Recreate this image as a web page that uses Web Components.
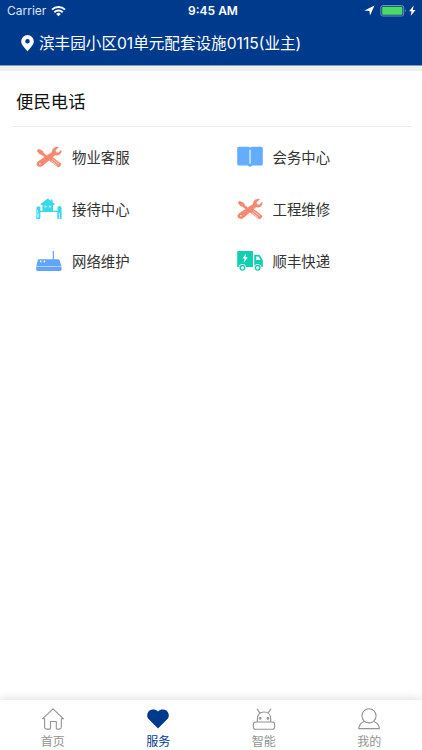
<!DOCTYPE html>
<html lang="zh-CN">
<head>
<meta charset="utf-8">
<title>便民电话</title>
<style>
    html, body {
        margin: 0;
        height: 100%;
        overflow: hidden;
        background: #fff;
        font-family: "Liberation Sans", "Noto Sans CJK SC", sans-serif;
    }
</style>
</head>
<body>
<service-page></service-page>

<script>
const icons = {
    tools: `
        <g fill="#f5886d" stroke="#f5886d" stroke-width=".3" stroke-linejoin="round">
            <path d="M22.700 1.200l-3.200 3 .5 2.200 2.300.4 3-2.700c.5 2.800-1.400 5.200-4.100 5.200-.7 0-1.400-.1-2-.4L6.600 19.700c-1.500 1.300-3.700 1.500-5 .3-1.300-1.300-1.100-3.300.5-4.500L16.200 5.900C15.900 3 18.800.3 22.700 1.200z"/>
            <path d="M2.600 3l4.200 2 .8 2.100 4.700 3.900-1.800 1.800-4.700-4-2.300-.7L.9 4.700z"/>
            <path d="M16.200 11l8.400 6.300c1.200 1.300-1 4.100-2.700 3.700L13 14.300z"/>
        </g>
        <circle cx="3.900" cy="17.800" r=".8" fill="#fff"/>
        <path d="M16.400 13l6.400 5M15 14.600l6.400 5" stroke="#fff" stroke-width=".6"/>`,
    book: `
        <path fill="#62adff" d="M2 .8h8.200c1.300 0 2.200.2 2.800.8.600-.6 1.500-.8 2.800-.8H24c1.200 0 1.800.7 1.800 1.700v15.400c0 1-.6 1.600-1.800 1.600h-8.500c-.9 0-1.200 1.300-2.500 1.300s-1.600-1.300-2.500-1.300H2c-1.200 0-1.800-.6-1.800-1.600V2.500C.2 1.500.8.800 2 .8z"/>
        <path d="M13 3.800v13.800" stroke="#fff" stroke-width="1.100"/>`,
    reception: `
        <g fill="#3ad9e8">
            <path d="M11.700.6l3 2.200V1.400h1.900v2.800l2.200 1.700-.7 1.200h-1v5.700H21v1.300H4.700v-1.300h1.800V7.100H5.200l-.7-1.200z"/>
            <path d="M.4 10.300c0-1.400 1-2.100 2-2.100s1.900.7 1.900 1.900v2.700h1.200v1.300H4.400v5.200c0 1.200-.8 2-2.100 2H.4zM21.500 10c0-1.200.8-2 2-2s2.100.8 2.100 2.200V21h-1.900v-6.200h-.8V21h-1.600v-6.900h-1.400v-1.300h1.600z"/>
        </g>
        <path d="M8.900 7.900h1.400v1.300H8.900zM13.200 7.900h1.400v1.300h-1.400zM1.600 12v2.300l1 1.500v3.300h-1v-3.300" fill="none" stroke="#fff" stroke-width=".5"/>`,
    router: `
        <g fill="#62a4f8">
            <path d="M16.700 1h1.200v8.300h4.200c.8 0 1.300.3 1.500 1l1.800 5.600H.4l1.400-5.600c.2-.7.700-1 1.400-1h13.500z"/>
            <path d="M.2 16.400h25.300v3.100c0 .9-.5 1.400-1.400 1.400H1.600c-.9 0-1.400-.5-1.400-1.400z"/>
        </g>
        <g fill="#fff"><circle cx="4.700" cy="11.400" r=".9"/><circle cx="8.400" cy="11.400" r=".9"/></g>`,
    truck: `
        <path fill="#13cfb1" d="M1.300 1h13.500c.8 0 1.200.4 1.200 1.200V17H9.200a4 4 0 0 0-7.700 0H.2V2c0-.7.400-1 1.100-1zM17.200 4.700h4.300c.7 0 1.100.3 1.500.9l2.500 3.900.3 1V17h-1.200a4 4 0 0 0-7.400-1z"/>
        <path fill="#fff" d="M9 3.500l-3.500 5h2.200l-1 4.300 4.100-5.600H8.400zM19.200 6.500h2.400l2 3.500h-4.400z"/>
        <g fill="#fff" stroke="#13cfb1" stroke-width="1.400"><circle cx="5.400" cy="17.800" r="2.300"/><circle cx="20.700" cy="17.800" r="2.300"/></g>`
};

const tabIcons = {
    home: `<path d="M3.600 11.800H1.500L12 1.800l10.500 10h-2.200v8.400c0 1.200-.7 1.900-1.900 1.900h-2.100c-.7 0-1-.4-1-1.100v-6.500H9.500V21c0 .7-.4 1.100-1.100 1.100H5.500c-1.200 0-1.900-.7-1.900-1.900z"/>`,
    heart: `<path fill="currentColor" d="M12 21.400L2.800 12.300C1.700 11.200 1.200 9.800 1.200 8.400c0-3 2.400-5.800 5.500-5.800 2.200 0 4.200.6 5.300 1.900 1.100-1.300 3.100-1.900 5.300-1.900 3.100 0 5.500 2.800 5.500 5.800 0 1.400-.5 2.800-1.600 3.900z" stroke="none"/>`,
    robot: `<path d="M5.400 15V11.500C5.400 7.700 8 5 12 5s6.700 2.700 6.700 6.500V15M7.900 6.100L5 1.700M16.100 6.100L19 1.700"/><rect x="1.400" y="15" width="21.200" height="7.300" rx="2.400"/><circle cx="8.200" cy="11.300" r=".8" fill="currentColor"/><circle cx="15.900" cy="11.300" r=".8" fill="currentColor"/>`,
    user: `<circle cx="12" cy="8.800" r="7.100"/><path d="M7.200 14.400c-3.200 1.100-5.100 3.500-5.500 7.200h20.700c-.4-3.700-2.300-6.100-5.500-7.200"/>`
};

class StatusBar extends HTMLElement {
    constructor() {
        super();
        this.attachShadow({ mode: 'open' });
        this.shadowRoot.innerHTML = `
            <style>
                :host {
                    display: grid;
                    grid-template-columns: 1fr auto 1fr;
                    align-items: center;
                    height: 22px;
                    padding: 0 5px 0 7px;
                    color: #fff;
                    font: 12px/22px Inter, sans-serif;
                }
                .carrier, .power { display: flex; align-items: center; }
                .carrier { gap: 5px; color: #dbe6f5; }
                .power { justify-content: flex-end; }
                .time { font-weight: 600; padding-left: 2px; }
                svg { display: block; }
            </style>
            <div class="carrier">
                <span>Carrier</span>
                <svg width="15" height="11" viewBox="0 0 15 11" fill="none" stroke="#fff" stroke-width="1.900">
                    <path d="M1 3.700a9.200 9.200 0 0 1 13 0M3.300 6.200a6 6 0 0 1 8.400 0"/>
                    <path d="M7.500 10.200L5.200 7.900a3.300 3.300 0 0 1 4.600 0z" fill="#fff" stroke="none"/>
                </svg>
            </div>
            <span class="time">9:45 AM</span>
            <div class="power">
                <svg width="54" height="14" viewBox="0 0 54 14">
                    <path fill="#fff" d="M11.500 1.500L7 11.500l-.6-4.400-5-.6z"/>
                    <rect x="17.900" y="1.500" width="22.800" height="10.500" rx="2" fill="none" stroke="#6f93c2"/>
                    <rect x="19.200" y="2.800" width="20.200" height="7.900" rx=".8" fill="#4cd964"/>
                    <path fill="#8ba7ce" d="M42 5.100q1.500 1.700 0 3.400z"/>
                    <path fill="#fff" d="M50.700 1.500L46.100 7.300h2.500l-1 4.700 4.900-5.900h-2.700z"/>
                </svg>
            </div>
        `;
    }
}

class LocationBar extends HTMLElement {
    constructor() {
        super();
        this.attachShadow({ mode: 'open' });
        this.shadowRoot.innerHTML = `
            <style>
                :host {
                    display: flex;
                    align-items: center;
                    gap: 5px;
                    height: 43px;
                    padding-left: 21px;
                    color: #fff;
                    font: 15.600px/43px Inter, "Noto Sans CJK SC", sans-serif;
                    white-space: nowrap;
                }
                svg { display: block; }
            </style>
            <svg width="13" height="17" viewBox="0 0 13 17">
                <path fill="#fff" fill-rule="evenodd" d="M6.500 0a6.300 6.300 0 0 1 6.300 6.400c0 3.200-3.400 6.400-6.300 9.800C3.600 12.800.2 9.600.2 6.400A6.300 6.300 0 0 1 6.500 0zm0 3.900a2.300 2.300 0 1 0 0 4.600 2.300 2.300 0 0 0 0-4.600z"/>
            </svg>
            <span><slot></slot></span>
        `;
    }
}

class ServiceItem extends HTMLElement {
    constructor() {
        super();
        this.attachShadow({ mode: 'open' });
    }

    connectedCallback() {
        this.shadowRoot.innerHTML = `
            <style>
                :host {
                    display: flex;
                    align-items: center;
                    gap: 10px;
                    height: 52px;
                    padding-left: 25px;
                    color: #333;
                    font-size: 14.400px;
                    line-height: 20px;
                }
                svg { display: block; }
                span { padding-top: 2px; }
            </style>
            <svg width="26" height="22" viewBox="0 0 26 22">${icons[this.getAttribute('icon')]}</svg>
            <span><slot></slot></span>
        `;
    }
}

class PhoneCard extends HTMLElement {
    constructor() {
        super();
        this.attachShadow({ mode: 'open' });
        this.shadowRoot.innerHTML = `
            <style>
                :host {
                    display: block;
                    padding: 6px 10px 0 11px;
                }
                h2 {
                    margin: 0;
                    padding-left: 5px;
                    height: 49px;
                    border-bottom: 1px solid #eee;
                    color: #111;
                    font-size: 17.400px;
                    font-weight: 400;
                    line-height: 50px;
                }
                .list {
                    display: grid;
                    grid-template-columns: 1fr 1fr;
                    padding-top: 4px;
                }
            </style>
            <h2><slot name="title"></slot></h2>
            <div class="list"><slot></slot></div>
        `;
    }
}

class TabItem extends HTMLElement {
    constructor() {
        super();
        this.attachShadow({ mode: 'open' });
    }

    connectedCallback() {
        this.shadowRoot.innerHTML = `
            <style>
                :host {
                    flex: 1;
                    display: flex;
                    flex-direction: column;
                    align-items: center;
                    padding-top: 7px;
                    color: #929292;
                    font-size: 12px;
                    line-height: 18px;
                }
                :host([active]) { color: #003a8c; }
                svg { display: block; flex: none; margin-bottom: 2px; }
            </style>
            <svg width="24" height="24" viewBox="0 0 24 24" fill="none" stroke="currentColor" stroke-width="1.100" stroke-linejoin="round">${tabIcons[this.getAttribute('icon')]}</svg>
            <span><slot></slot></span>
        `;
    }
}

class TabBar extends HTMLElement {
    constructor() {
        super();
        this.attachShadow({ mode: 'open' });
        this.shadowRoot.innerHTML = `
            <style>
                :host {
                    display: flex;
                    height: 50px;
                    background: #fff;
                    box-shadow: 0 0 10px rgba(0,0,0,0.16);
                }
            </style>
            <slot></slot>
        `;
    }
}

class ServicePage extends HTMLElement {
    constructor() {
        super();
        this.attachShadow({ mode: 'open' });
        this.shadowRoot.innerHTML = `
            <style>
                :host {
                    display: flex;
                    flex-direction: column;
                    height: 100vh;
                }
                header {
                    background: #003a8c;
                    border-bottom: 1px solid #7f9cc5;
                }
                main {
                    flex: 1;
                    border-top: 5px solid #efefef;
                }
            </style>
            <header>
                <status-bar></status-bar>
                <location-bar>滨丰园小区01单元配套设施0115(业主)</location-bar>
            </header>
            <main>
                <phone-card>
                    <span slot="title">便民电话</span>
                    <service-item icon="tools">物业客服</service-item>
                    <service-item icon="book">会务中心</service-item>
                    <service-item icon="reception">接待中心</service-item>
                    <service-item icon="tools">工程维修</service-item>
                    <service-item icon="router">网络维护</service-item>
                    <service-item icon="truck">顺丰快递</service-item>
                </phone-card>
            </main>
            <tab-bar>
                <tab-item icon="home">首页</tab-item>
                <tab-item icon="heart" active>服务</tab-item>
                <tab-item icon="robot">智能</tab-item>
                <tab-item icon="user">我的</tab-item>
            </tab-bar>
        `;
    }
}

customElements.define('status-bar', StatusBar);
customElements.define('location-bar', LocationBar);
customElements.define('service-item', ServiceItem);
customElements.define('phone-card', PhoneCard);
customElements.define('tab-item', TabItem);
customElements.define('tab-bar', TabBar);
customElements.define('service-page', ServicePage);
</script>
</body>
</html>
